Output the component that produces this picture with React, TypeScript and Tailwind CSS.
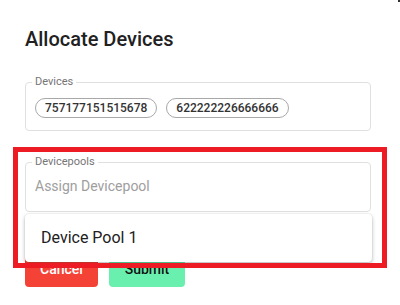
import React from 'react';

const devices = ['757177151515678', '622222226666666'];

const font = { fontFamily: 'Roboto, "Noto Sans", sans-serif' };

const App: React.FC = () => {
  return (
    <div
      className="relative w-[400px] h-[305px] overflow-hidden bg-white pl-[25px] pr-[29px] pt-[27px]"
      style={font}
    >
      {/* Title */}
      <h2 className="text-[20px] leading-[24px] font-medium text-[#212121]">Allocate Devices</h2>

      {/* Devices */}
      <fieldset className="mt-[25px] border border-[#e0e0e0] rounded-[4px] pl-[9px] pr-[9px] pt-[10px] pb-[12px]">
        <legend className="-ml-[3px] px-[3px] text-[11px] leading-[12px] text-[#757575]">Devices</legend>
        <div className="flex items-center gap-[9px]">
          {devices.map((d) => (
            <span
              key={d}
              className="h-[20px] flex items-center px-[9px] border border-[#a8a8a8] rounded-full text-[12px] font-medium text-[#333333]"
            >
              {d}
            </span>
          ))}
        </div>
      </fieldset>

      {/* Devicepools */}
      <fieldset className="mt-[25px] border border-[#e0e0e0] rounded-[4px] pl-[9px] pr-[9px] pt-[8px] pb-[15px]">
        <legend className="-ml-[3px] px-[3px] text-[11px] leading-[12px] text-[#757575]">Devicepools</legend>
        <div className="text-[14px] leading-[20px] text-[#9e9e9e]">Assign Devicepool</div>
      </fieldset>

      {/* Actions */}
      <div className="mt-[39px] flex gap-[11px]">
        <button className="w-[73px] h-[36px] rounded-[4px] bg-[#f44336] text-white text-[14px] font-medium">
          Cancel
        </button>
        <button className="w-[76px] h-[36px] rounded-[4px] bg-[#69f0ae] text-[#111111] text-[14px] font-medium">
          Submit
        </button>
      </div>

      {/* Dropdown menu */}
      <div className="absolute left-[25px] top-[214px] w-[347px] h-[48px] flex items-center pl-[16px] bg-white rounded-[4px] shadow-[0_2px_4px_rgba(0,0,0,0.25),0_0_2px_rgba(0,0,0,0.12)]">
        <span className="text-[16px] text-[#212121]">Device Pool 1</span>
      </div>

      {/* Highlight annotation */}
      <div className="absolute left-[13px] top-[147px] w-[374px] h-[121px] border-[5px] border-[#ed1c24] pointer-events-none" />

      <div className="absolute right-0 top-0 w-[2px] h-[2px] bg-[#333333]" />
    </div>
  );
};

export default App;
